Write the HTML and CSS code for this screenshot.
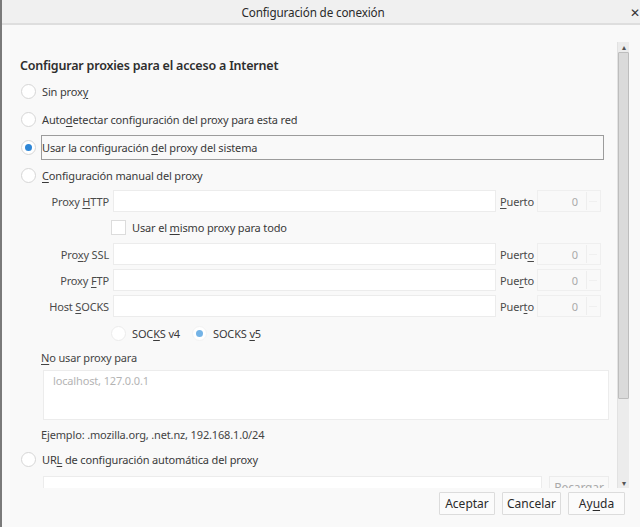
FILE: index.html
```html
<!DOCTYPE html>
<html>
<head>
<meta charset="utf-8">
<title>Configuración de conexión</title>
<link rel="stylesheet" href="styles.css">
</head>
<body>
<div class="win">
	<div class="titlebar">
		<span class="title">Configuración de conexión</span>
		<span class="close">&#x2715;</span>
	</div>

	<div class="main">
		<div class="pane">
			<h1 class="head">Configurar proxies para el acceso a Internet</h1>

			<div class="opt"><span class="radio"></span><span>Sin prox<u>y</u></span></div>
			<div class="opt"><span class="radio"></span><span>Auto<u>d</u>etectar configuración del proxy para esta red</span></div>
			<div class="opt"><span class="radio on"></span><span class="focus">Usar la configuración <u>d</u>el proxy del sistema</span></div>
			<div class="opt"><span class="radio"></span><span><u>C</u>onfiguración manual del proxy</span></div>

			<div class="grid">
				<label class="lbl">Proxy <u>H</u>TTP</label>
				<span class="field"></span>
				<label class="plbl"><u>P</u>uerto</label>
				<span class="port">0<i class="spin"></i></span>

				<span></span>
				<div class="same"><span class="check"></span><span>Usar el <u>m</u>ismo proxy para todo</span></div>

				<label class="lbl">Pro<u>x</u>y SSL</label>
				<span class="field"></span>
				<label class="plbl">Puert<u>o</u></label>
				<span class="port">0<i class="spin"></i></span>

				<label class="lbl">Proxy <u>F</u>TP</label>
				<span class="field"></span>
				<label class="plbl">Pue<u>r</u>to</label>
				<span class="port">0<i class="spin"></i></span>

				<label class="lbl">Host <u>S</u>OCKS</label>
				<span class="field"></span>
				<label class="plbl">Puer<u>t</u>o</label>
				<span class="port">0<i class="spin"></i></span>

				<span></span>
				<div class="socks">
					<span class="radio faint"></span><span>SOC<u>K</u>S v4</span>
					<span class="radio on bare"></span><span>SOCKS <u>v</u>5</span>
				</div>
			</div>

			<div class="noproxy"><u>N</u>o usar proxy para</div>
			<div class="area">localhost, 127.0.0.1</div>
			<div class="hint">Ejemplo: .mozilla.org, .net.nz, 192.168.1.0/24</div>

			<div class="opt"><span class="radio"></span><span>UR<u>L</u> de configuración automática del proxy</span></div>
			<div class="urlrow">
				<span class="field url"></span>
				<span class="reload">Recargar</span>
			</div>
		</div>

		<div class="sbar">
			<span class="arrow">&#x25B4;</span>
			<span class="track"><span class="thumb"></span></span>
			<span class="arrow">&#x25BE;</span>
		</div>
	</div>

	<div class="foot">
		<button class="btn ok">Aceptar</button>
		<button class="btn cancel">Cancelar</button>
		<button class="btn help">Ay<u>u</u>da</button>
	</div>
</div>
</body>
</html>
```

FILE: styles.css
```css
body{
	margin:0;
	padding:0;
	background:#f9f9f9;
	font-family:"Noto Sans","Open Sans",sans-serif;
	font-size:11px;
	letter-spacing:-0.15px;
	color:#3a3a3a;
}
u{
	text-decoration:underline;
	text-underline-offset:2px;
}
.win{
	width:640px;
	height:527px;
	border-left:2px solid #7a7a7a;
	box-sizing:border-box;
	display:flex;
	flex-direction:column;
	overflow:hidden;
}
.titlebar{
	height:23px;
	flex:none;
	background:#f0f0f0;
	border-bottom:2px solid #dedede;
	display:flex;
	align-items:center;
	justify-content:center;
	position:relative;
}
.title{
	font-size:11.7px;
	color:#2a2a2a;
	margin-left:-16px;
}
.close{
	position:absolute;
	right:0px;
	top:4px;
	font-size:12px;
	color:#333;
}
.main{
	flex:none;
	height:463px;
	display:flex;
}
.pane{
	width:615px;
	overflow:hidden;
	padding-top:32px;
	box-sizing:border-box;
}
.head{
	margin:0 0 2px 18px;
	font-size:12.5px;
	font-weight:600;
	letter-spacing:-0.2px;
	color:#2e2e2e;
	line-height:18px;
}
.opt{
	display:flex;
	align-items:center;
	height:28px;
	margin-left:19px;
}
.radio{
	width:13px;
	height:13px;
	border:1px solid #d6d6d6;
	border-radius:50%;
	background:#fff;
	flex:none;
	margin-right:6px;
	position:relative;
}
.radio.on::after{
	content:"";
	position:absolute;
	left:3px;
	top:3px;
	width:7px;
	height:7px;
	border-radius:50%;
	background:#2e86d6;
}
.radio.faint{
	border-color:#ececec;
}
.radio.bare{
	border-color:#f3f3f3;
}
.radio.bare::after{
	background:#74b3e6;
}
.focus{
	flex:none;
	width:563px;
	height:25px;
	line-height:24px;
	border:1px solid #9c9c9c;
	margin-left:-1px;
	box-sizing:border-box;
}
.grid{
	display:grid;
	grid-template-columns:107px 383px 33px 64px;
	column-gap:4px;
	grid-template-rows:22px 23px 22px 22px 22px 24px;
	row-gap:4px;
	margin-top:1px;
	align-items:center;
}
.lbl{
	text-align:right;
	color:#4a4a4a;
	white-space:nowrap;
}
.field{
	display:block;
	height:22px;
	border:1px solid #ececec;
	background:#fff;
	box-sizing:border-box;
}
.plbl{
	color:#4a4a4a;
	white-space:nowrap;
}
.port{
	display:flex;
	align-items:center;
	justify-content:flex-end;
	height:22px;
	border:1px solid #efefef;
	box-sizing:border-box;
	color:#aaa;
}
.spin{
	width:12px;
	height:18px;
	margin:0 1px 0 8px;
	border-left:1px solid #eee;
	background:linear-gradient(#f0f0f0,#f0f0f0) center/8px 1px no-repeat;
}
.same{
	grid-column:2 / 5;
	display:flex;
	align-items:center;
	margin-left:-2px;
}
.check{
	width:13px;
	height:13px;
	border:1px solid #dcdcdc;
	background:#fff;
	margin-right:6px;
}
.socks{
	grid-column:2 / 5;
	display:flex;
	align-items:center;
	margin-left:-2px;
}
.socks .radio.bare{
	margin-left:12px;
}
.noproxy{
	margin:3px 0 0 39px;
	height:20px;
	line-height:20px;
	color:#444;
}
.area{
	margin:2px 0 0 41px;
	width:566px;
	height:50px;
	border:1px solid #ececec;
	background:#fff;
	box-sizing:border-box;
	padding:2px 9px;
	color:#b4b4b4;
}
.hint{
	margin:5px 0 0 39px;
	height:20px;
	line-height:20px;
	color:#444;
}
.urlrow{
	display:flex;
	gap:7px;
	margin:3px 0 0 41px;
}
.url{
	width:499px;
	height:24px;
}
.reload{
	width:60px;
	height:24px;
	border:1px solid #ececec;
	box-sizing:border-box;
	color:#aaa;
	font-size:12px;
	text-align:center;
	line-height:22px;
}
.sbar{
	width:11px;
	margin:17px 0 0 0;
	display:flex;
	flex-direction:column;
	align-items:center;
	height:446px;
	background:#ececec;
	border-left:1px solid #e2e2e2;
}
.arrow{
	font-size:8px;
	color:#555;
	line-height:10px;
	height:10px;
}
.track{
	flex:1;
	width:100%;
	margin-bottom:2px;
}
.thumb{
	display:block;
	width:9px;
	height:345px;
	background:#dadada;
	border:1px solid #bdbdbd;
	border-radius:1px;
}
.foot{
	flex:none;
	display:flex;
	justify-content:flex-end;
	gap:7px;
	padding:4px 15px 0 0;
}
.btn{
	font:inherit;
	font-size:12px;
	color:#2a2a2a;
	height:23px;
	padding:0;
	background:#fbfbfb;
	border:1px solid #dcdcdc;
	border-radius:1px;
}
.ok{
	width:56px;
}
.cancel{
	width:59px;
}
.help{
	width:57px;
}
```
